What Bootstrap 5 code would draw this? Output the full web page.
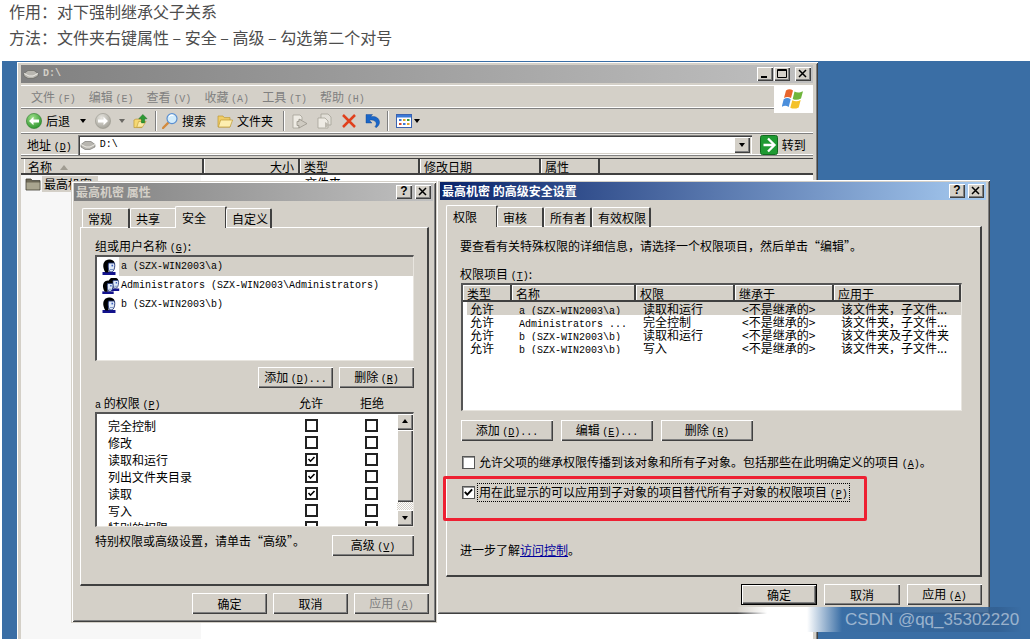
<!DOCTYPE html>
<html lang="zh-CN">
<head>
    <meta charset="UTF-8">
    <meta name="viewport" content="width=device-width, initial-scale=1.0">
    <title>对下强制继承父子关系</title>
    <link href="https://cdn.jsdelivr.net/npm/bootstrap@5.3.0/dist/css/bootstrap.min.css" rel="stylesheet">
    <style>
        body { width: 1030px; height: 639px; overflow: hidden; background: #fff; font-family: "Noto Sans CJK SC", sans-serif; font-size: 12px; line-height: 14px; color: #000; }
        .post-text { padding: 0 0 0 9px; height: 61px; font-size: 16px; line-height: 22px; color: #4d4d4d; }
        .post-text p { margin: 0; height: 26px; }
        .desk { position: relative; margin-left: 2px; height: 578px; background: #3a6ea5; overflow: hidden; }
        .win { position: absolute; background: #d4d0c8; box-shadow: inset 1px 1px 0 #fff, inset -1px -1px 0 #404040, inset 2px 2px 0 #d4d0c8, inset -2px -2px 0 #808080; }
        .win-explorer { left: 15px; top: 1px; width: 801px; height: 600px; padding: 3px 5px 0 4px; }
        .win-props { left: 70px; top: 121px; width: 364px; height: 440px; padding: 1px 3px 0 2px; outline: 1px solid #d4d0c8; }
        .win-adv { left: 435px; top: 119px; width: 553px; height: 434px; padding: 2px 4px 0 3px; }
        .titlebar { height: 18px; padding: 0 2px; font-weight: 700; color: #d4d0c8; background: linear-gradient(90deg, #808080, #c0c0c0); }
        .titlebar.on { color: #fff; background: linear-gradient(90deg, #0a246a, #a6caf0); }
        .tb-btn { width: 16px; height: 14px; background: #d4d0c8; color: #000; font: 700 12px/13px "Liberation Sans", sans-serif; text-align: center; box-shadow: inset 1px 1px 0 #fff, inset -1px -1px 0 #404040, inset -2px -2px 0 #808080; }
        .tb-btn svg { display: block; margin: 2px 0 0 3px; }
        .mono { font-family: "Liberation Mono", monospace; font-size: 10px; line-height: 10px; }
        .menubar { height: 24px; margin-top: 2px; border-top: 1px solid #fff; border-bottom: 1px solid #808080; box-shadow: inset 0 -1px 0 #fff; color: #808080; padding-left: 10px; }
        .menubar > span { width: 57.8px; }
        .flagbox { width: 39px; height: 28px; margin-bottom: -2px; margin-top: 2px; background: #fff; }
        .toolbar { height: 25px; padding-left: 5px; border-bottom: 1px solid #808080; box-shadow: inset 0 -1px 0 #fff; }
        .tool-sep { width: 2px; height: 20px; background: #808080; border-right: 1px solid #fff; }
        .caret-down { width: 0; height: 0; border: 3px solid transparent; border-top: 4px solid #000; border-bottom: 0; }
        .caret-up { display: inline-block; width: 0; height: 0; margin: 0 0 2px 8px; border: 4px solid transparent; border-bottom: 5px solid #a09c92; border-top: 0; }
        .addrbar { height: 22px; padding-left: 6px; padding-top: 1px; border-bottom: 1px solid #808080; box-shadow: inset 0 -1px 0 #fff; }
        .addr-input { width: 674px; height: 20px; margin-left: 6px; padding-left: 2px; background: #fff; box-shadow: inset 1px 1px 0 #808080, inset 2px 2px 0 #404040, inset -1px -1px 0 #fff, inset -2px -2px 0 #d4d0c8; }
        .addr-drop { width: 16px; height: 16px; margin: 0 2px; background: #d4d0c8; box-shadow: inset 1px 1px 0 #fff, inset -1px -1px 0 #404040, inset -2px -2px 0 #808080; }
        .col-head { height: 17px; margin-top: 2px; padding-left: 3px; border-top: 1px solid #404040; background: #d4d0c8; border-bottom: 2px solid #404040; }
        .col-head > span { height: 100%; padding-left: 4px; padding-top: 1px; border-right: 2px solid #404040; box-shadow: inset 1px 0 0 #fff; }
        .file-list { height: 480px; background: linear-gradient(90deg, #f7f7f7 180px, #fff 180px); padding: 1px 0 0 4px; color: #000; }
        .file-name { background: #d4d0c8; padding: 1px 4px 1px 2px; margin-left: 1px; width: 56px; white-space: nowrap; overflow: hidden; }
        .tabs-row { height: 26px; padding: 6px 0 0 6px; position: relative; z-index: 1; }
        .tab-item { height: 20px; margin-top: 1px; padding: 3px 0 0 5px; border-top: 1px solid #fff; border-left: 1px solid #fff; border-right: 2px solid #404040; border-top-left-radius: 2px; border-top-right-radius: 2px; }
        .tab-item.on { height: 22px; margin: -1px -1px -1px -2px; padding: 4px 0 0 6px; background: #d4d0c8; }
        .tab-panel { border-top: 1px solid #fff; border-left: 1px solid #fff; border-right: 2px solid #404040; border-bottom: 2px solid #404040; }
        .win-props .tab-panel { width: 349px; height: 359px; margin-left: 6px; padding: 11px 13px 0 14px; }
        .win-adv .tab-panel { width: 536px; height: 351px; margin-left: 6px; padding: 12px 0 0 13px; }
        .x-btn { padding: 0; border: 0; border-radius: 0; width: 75px; height: 21px; font-size: 12px; line-height: 14px; color: #000; background: #d4d0c8; box-shadow: inset 1px 1px 0 #fff, inset -1px -1px 0 #404040, inset -2px -2px 0 #808080; }
        .x-btn:disabled { opacity: 1; color: #808080; background: #d4d0c8; }
        .x-btn.deflt { outline: 1px solid #000; outline-offset: -1px; box-shadow: inset 2px 2px 0 #fff, inset -1px -1px 0 #000, inset -2px -2px 0 #404040, inset -3px -3px 0 #808080; }
        .sunken-box { background: #fff; border-top: 2px solid #555; border-left: 2px solid #555; border-right: 1px solid #e8e5df; border-bottom: 1px solid #e8e5df; overflow: hidden; }
        .user-row { padding: 0; border: 0; border-radius: 0; height: 19px; background: transparent; color: #000; display: flex; align-items: center; gap: 0; font-size: 10px; font-family: "Liberation Mono", monospace; }
        .user-row svg { flex: none; margin-left: 4px; margin-right: 2px; }
        .user-row span { align-self: stretch; display: flex; align-items: center; padding-left: 2px; flex-grow: 1; }
        .user-row.sel span { background: #d4d0c8; }
        .perm-head { margin-top: 8px; height: 14px; }
        .perm-head > span:nth-child(2) { margin-left: auto; width: 40px; text-align: center; margin-right: 21px; }
        .perm-head > span:nth-child(3) { width: 40px; text-align: center; margin-right: 22px; }
        .perm-box { height: 115px; margin-top: 2px; }
        .perm-rows { padding-top: 3px; }
        .perm-row { height: 17px; padding-left: 11px; align-items: center; }
        .perm-row > span { width: 197px; }
        .win-check.form-check-input[type=checkbox] { width: 13px; height: 13px; margin: 0; flex: none; border: 2px solid #222; border-radius: 0; background-color: #fff; }
        .perm-row .win-check.form-check-input[type=checkbox] + .win-check.form-check-input[type=checkbox] { margin-left: 47px; }
        .win-check.thin-edge.form-check-input[type=checkbox] { border: 1px solid #555; box-shadow: inset 1px 1px 0 #999; }
        .win-check:checked { background-color: #fff; border-color: #222; background-image: url("data:image/svg+xml,%3Csvg xmlns='http://www.w3.org/2000/svg' viewBox='0 0 9 9'%3E%3Cpath d='M1.5 4l2 2.2L7.5 2' fill='none' stroke='%23000' stroke-width='1.6'/%3E%3C/svg%3E"); background-size: 100%; }
        .win-check:focus { box-shadow: none; border-color: #222; }
        .scroll-col { width: 16px; flex: none; background: repeating-conic-gradient(#d4d0c8 0 25%, #fff 0 50%) 0 0/2px 2px; }
        .scroll-btn { height: 16px; background: #d4d0c8; box-shadow: inset 1px 1px 0 #fff, inset -1px -1px 0 #404040, inset -2px -2px 0 #808080; }
        .scroll-btn i { width: 0; height: 0; border: 3px solid transparent; }
        .scroll-thumb { height: 72px; background: #d4d0c8; box-shadow: inset 1px 1px 0 #fff, inset -1px -1px 0 #404040, inset -2px -2px 0 #808080; }
        .acl-box { width: 501px; height: 128px; margin: 1px 0 0 1px; }
        .acl-table { table-layout: fixed; width: 498px; margin: 0; font-size: 12px; line-height: 13px; border-collapse: separate; border-spacing: 0; }
        .acl-table .mono { line-height: 0; }
        .acl-table > :not(caption) > * > * { padding: 0 0 0 7px; border: 0; color: #000; background: transparent; box-shadow: none; height: 13px; white-space: nowrap; overflow: hidden; }
        .acl-table thead th { font-weight: 400; height: 17px; background: #d4d0c8; padding: 0 0 0 4px; border-right: 2px solid #404040; border-bottom: 2px solid #404040; box-shadow: inset 1px 1px 0 #fff; }
        .acl-table tr.sel td { background: #d4d0c8; }
        .acl-table tr.sel td:first-child { background: linear-gradient(90deg, #fff 4px, #d4d0c8 4px); }
        .focus-line { outline: 1px dotted #000; outline-offset: 0; padding: 1px 1px; }
        .red-mark { position: absolute; left: 6px; top: 296px; width: 424px; height: 45px; border: 3px solid #ee2032; border-radius: 2px; pointer-events: none; }
        .acl-link { color: #00009c; }
        .mark-stamp { position: absolute; left: 735px; top: 546px; width: 285px; height: 25px; padding-left: 108px; font: 17px/26px "Liberation Sans", sans-serif; color: rgba(255,255,255,.5); white-space: nowrap; background: linear-gradient(90deg, rgba(255,255,255,0) 0, #fff 30px, #fff 70px, rgba(58,110,165,1) 105px, rgba(50,95,145,.85) 260px, rgba(58,110,165,0) 285px); }
    </style>
</head>
<body>
    <svg width="0" height="0" class="position-absolute">
        <defs>
            <radialGradient id="gGreen" cx=".4" cy=".3" r=".8"><stop offset="0" stop-color="#9fe08a"/><stop offset="1" stop-color="#1f8a22"/></radialGradient>
            <radialGradient id="gGray" cx=".4" cy=".3" r=".8"><stop offset="0" stop-color="#e8e6e0"/><stop offset="1" stop-color="#9a988f"/></radialGradient>
            <symbol id="i-back" viewBox="0 0 16 16"><circle cx="8" cy="8" r="7.6" fill="url(#gGreen)" stroke="#2f7d2d" stroke-width=".6"/><path d="M3 8l4.5-4.2v2.7H13v3H7.5v2.7z" fill="#fff"/></symbol>
            <symbol id="i-fwd" viewBox="0 0 16 16"><circle cx="8" cy="8" r="7.6" fill="url(#gGray)" stroke="#9b998f" stroke-width=".6"/><path d="M13 8L8.5 3.8v2.7H3v3h5.500v2.700z" fill="#fff"/></symbol>
            <symbol id="i-up" viewBox="0 0 16 16"><path d="M1 7l2-1h7l-.5 9H1z" fill="#f5d873" stroke="#b8932c" stroke-width=".7"/><path d="M10 15l-6 .2L6 9h8z" fill="#fbeaa3" stroke="#b8932c" stroke-width=".6" transform="translate(0 -.5)"/><path d="M10.500 1L15 5.600h-2.600V10H9V5.600H6.200z" fill="#2c9a33" stroke="#17681e" stroke-width=".5"/></symbol>
            <symbol id="i-search" viewBox="0 0 16 16"><path d="M1 15l5-5" stroke="#d38a3d" stroke-width="2.4" stroke-linecap="round"/><circle cx="10" cy="5.600" r="5" fill="#d3ecfb" stroke="#5b8fd0" stroke-width="1.2"/><path d="M7 4c1-1.600 3-2 4.400-1.400" stroke="#fff" stroke-width="1.2" fill="none"/></symbol>
            <symbol id="i-folder" viewBox="0 0 16 16"><path d="M1 3h5l1.200 1.600H13V14H1z" fill="#f0cd68" stroke="#bd9a35" stroke-width=".7"/><path d="M1.400 14L3.600 7H15.600L13 14z" fill="#fdeeb0" stroke="#bd9a35" stroke-width=".7"/></symbol>
            <symbol id="i-fold-gray" viewBox="0 0 16 16"><path d="M1 3h5l1.200 1.600H15V14H1z" fill="#6e6a58" stroke="#3f3d33" stroke-width=".8"/><path d="M1.500 6.500H14.600V13.500H1.500z" fill="#a9a58f"/></symbol>
            <symbol id="i-move" viewBox="0 0 16 16"><path d="M1 2h7l2 2v3h-3v3H7v5H1z" fill="#eeebe4" stroke="#a5a297" stroke-width=".8"/><path d="M7 6l8 4.600-8 4.400v-2.500H5V8.500h2z" fill="#cfcbc2" stroke="#908d83" stroke-width=".7"/></symbol>
            <symbol id="i-copy" viewBox="0 0 16 16"><path d="M4 1h7l3 3v8H4z" fill="#e2dfd8" stroke="#a5a297" stroke-width=".8"/><path d="M1 5h7l3 3v7H1z" fill="#eeebe4" stroke="#a5a297" stroke-width=".8"/><path d="M8 9l5 3-5 3z" fill="#bdb9af"/></symbol>
            <symbol id="i-del" viewBox="0 0 16 16"><path d="M2 2l12 12M14 2L2 14" stroke="#e0401c" stroke-width="2.5"/></symbol>
            <symbol id="i-undo" viewBox="0 0 16 16"><path d="M1 1.500h6.500L5.600 3.700c4-1 8.400.8 8.900 5 .2 2.300-1 4.600-3.500 6l-1-1.200c1.300-1.200 1.500-2.800 1-3.900C10.200 7.300 7.300 6.600 4.400 7.300L7 10H1z" fill="#1a66c8" stroke="#0d3f8a" stroke-width=".4"/></symbol>
            <symbol id="i-views" viewBox="0 0 16 16"><rect x=".5" y="1.500" width="15" height="13" fill="#fff" stroke="#3a62b0"/><rect x="1" y="2" width="14" height="2.500" fill="#3a79d8"/><g><rect x="3" y="6" width="2.500" height="2" fill="#3a79d8"/><rect x="7" y="6" width="2.500" height="2" fill="#e2a32b"/><rect x="11" y="6" width="2.500" height="2" fill="#3a9a3d"/><rect x="3" y="10" width="2.500" height="2" fill="#d04a30"/><rect x="7" y="10" width="2.500" height="2" fill="#3a79d8"/><rect x="11" y="10" width="2.500" height="2" fill="#e2a32b"/></g></symbol>
            <symbol id="i-drive" viewBox="0 0 16 12"><path d="M1 5.500L5 2.500h6l4 3V8l-5 2.500H5L1 8z" fill="#b8b6b0" stroke="#55544f" stroke-width=".5"/><path d="M1 5.500l5 2.500h4l5-2.500" fill="none" stroke="#eeece6" stroke-width="1"/></symbol>
            <symbol id="i-go" viewBox="0 0 18 20"><rect x=".5" y=".5" width="17" height="19" rx="2" fill="#1f9a32" stroke="#126a1f"/><path d="M8 3.500L14.500 10 8 16.500M3.500 10H14" fill="none" stroke="#fff" stroke-width="2.300"/></symbol>
            <symbol id="i-flag" viewBox="0 0 24 22"><path d="M4 2.500c2.500-1.700 4.500-1.700 7 0L9 10c-2.500-1.500-4.500-1.500-7 0z" fill="#e8652c"/><path d="M12.500 3.500c2.500 1.300 5 1.300 8.500-.3L19 10.600c-3 1.600-5.500 1.600-8.300.3z" fill="#6fb53c"/><path d="M1.700 11.200c2.500-1.500 4.500-1.500 7 0l-2 7.800c-2.500-1.600-4.500-1.600-7 0z" fill="#4b8fdc"/><path d="M10.300 12.200c2.800 1.300 5.300 1.300 8.400-.3l-2 7.500c-3 1.500-5.800 1.600-8.400.3z" fill="#f4c22b"/></symbol>
            <symbol id="i-user" viewBox="0 0 16 16"><path d="M1.500 13h13v3h-13z" fill="#12128c"/><path d="M2.500 9C1.500 4 4 .5 8 .5c3 0 5.500 1.500 5.500 3.500H8C7 6 7 9 7.500 11v2.500H4.500C3.500 12 3 11 2.500 9z" fill="#000"/><path d="M7.500 4h6c.7 3 .1 7-2 8.700-1 .4-2.500.3-3.500-.7-.8-2.500-1-5.500-.5-8z" fill="#dfe9f7" stroke="#1c2f70" stroke-width=".9"/><path d="M10.500 5.700h1.600v1.700h-1.600z" fill="#3a5fc0"/><path d="M9 10h3v1H9z" fill="#7f98c8"/></symbol>
            <symbol id="i-users" viewBox="0 0 20 16"><g transform="translate(5.500 -1)"><use href="#i-user" width="14" height="14"/></g><g transform="translate(0 2)"><use href="#i-user" width="14" height="14"/></g></symbol>
        </defs>
    </svg>

    <div class="post-text">
        <p>作用：对下强制继承父子关系</p>
        <p>方法：文件夹右键属性 – 安全 – 高级 – 勾选第二个对号</p>
    </div>

    <div class="desk">
        <!-- explorer -->
        <div class="win win-explorer">
            <div class="titlebar d-flex align-items-center">
                <svg width="16" height="12"><use href="#i-drive"/></svg>
                <span class="mono ms-1">D:\</span>
                <div class="ms-auto d-flex" style="gap:1px">
                    <div class="tb-btn"><svg width="9" height="9"><path d="M1 7h6v2H1z"/></svg></div>
                    <div class="tb-btn me-1"><svg width="10" height="9"><path d="M.5.500h9v8h-9zM.5 1.500h9" fill="none" stroke="#000"/></svg></div>
                    <div class="tb-btn"><svg width="9" height="9"><path d="M1 1l7 7M8 1L1 8" stroke="#000" stroke-width="1.500"/></svg></div>
                </div>
            </div>
            <div class="menubar d-flex align-items-center">
                <span>文件 <span class="mono">(F)</span></span>
                <span>编辑 <span class="mono">(E)</span></span>
                <span>查看 <span class="mono">(V)</span></span>
                <span>收藏 <span class="mono">(A)</span></span>
                <span>工具 <span class="mono">(T)</span></span>
                <span>帮助 <span class="mono">(H)</span></span>
                <div class="flagbox ms-auto d-flex align-items-center justify-content-center"><svg width="24" height="22"><use href="#i-flag"/></svg></div>
            </div>
            <div class="toolbar d-flex align-items-center">
                <svg width="16" height="16"><use href="#i-back"/></svg>
                <span class="ms-1">后退</span>
                <i class="caret-down" style="margin-left:10px"></i>
                <svg width="16" height="16" style="margin-left:9px"><use href="#i-fwd"/></svg>
                <i class="caret-down opacity-50" style="margin-left:8px"></i>
                <svg width="15" height="16" style="margin-left:8px"><use href="#i-up"/></svg>
                <div class="tool-sep" style="margin-left:7px"></div>
                <svg width="16" height="16" style="margin-left:5px"><use href="#i-search"/></svg>
                <span class="ms-1">搜索</span>
                <svg width="16" height="16" style="margin-left:11px"><use href="#i-folder"/></svg>
                <span class="ms-1">文件夹</span>
                <div class="tool-sep" style="margin-left:10px"></div>
                <svg width="16" height="16" style="margin-left:7px"><use href="#i-move"/></svg>
                <svg width="16" height="16" style="margin-left:9px"><use href="#i-copy"/></svg>
                <svg width="16" height="16" style="margin-left:8px"><use href="#i-del"/></svg>
                <svg width="16" height="16" style="margin-left:8px"><use href="#i-undo"/></svg>
                <div class="tool-sep" style="margin-left:6px"></div>
                <svg width="16" height="16" style="margin-left:7px"><use href="#i-views"/></svg>
                <i class="caret-down" style="margin-left:2px"></i>
            </div>
            <div class="addrbar d-flex align-items-center">
                <span>地址 <span class="mono">(<u>D</u>)</span></span>
                <div class="addr-input d-flex align-items-center">
                    <svg width="16" height="12"><use href="#i-drive"/></svg>
                    <span class="mono ms-1">D:\</span>
                    <div class="addr-drop ms-auto d-flex align-items-center justify-content-center"><i class="caret-down"></i></div>
                </div>
                <svg width="18" height="20" class="ms-2"><use href="#i-go"/></svg>
                <span class="ms-1">转到</span>
            </div>
            <div class="col-head d-flex">
                <span style="width:180px">名称<i class="caret-up"></i></span>
                <span class="text-end pe-1" style="width:96px">大小</span>
                <span style="width:120px">类型</span>
                <span style="width:121px">修改日期</span>
                <span style="width:59px">属性</span>
            </div>
            <div class="file-list d-flex align-items-start">
                <svg width="16" height="16"><use href="#i-fold-gray"/></svg>
                <span class="file-name">最高机密</span>
                <span style="margin-left:207px">文件夹</span>
            </div>
        </div>

        <!-- properties dialog -->
        <div class="win win-props">
            <div class="titlebar d-flex align-items-center">
                <span>最高机密 属性</span>
                <div class="ms-auto d-flex" style="gap:3px">
                    <div class="tb-btn">?</div>
                    <div class="tb-btn"><svg width="9" height="9"><path d="M1 1l7 7M8 1L1 8" stroke="#000" stroke-width="1.500"/></svg></div>
                </div>
            </div>
            <div class="tabs-row d-flex">
                <div class="tab-item" style="width:48px;margin-left:2px">常规</div>
                <div class="tab-item" style="width:47px">共享</div>
                <div class="tab-item on" style="width:52px">安全</div>
                <div class="tab-item" style="width:46px">自定义</div>
            </div>
            <div class="tab-panel">
                <div>组或用户名称 <span class="mono">(<u>G</u>)</span>:</div>
                <div class="sunken-box list-group rounded-0" style="height:106px;margin-top:1px">
                    <div class="list-group-item user-row sel mt-0"><svg width="16" height="16"><use href="#i-user"/></svg><span>a (SZX-WIN2003\a)</span></div>
                    <div class="list-group-item user-row"><svg width="20" height="16" style="margin:0 0 0 4px"><use href="#i-users"/></svg><span class="ps-0">Administrators (SZX-WIN2003\Administrators)</span></div>
                    <div class="list-group-item user-row"><svg width="16" height="16"><use href="#i-user"/></svg><span>b (SZX-WIN2003\b)</span></div>
                </div>
                <div class="d-flex justify-content-end" style="gap:6px;margin-top:6px">
                    <button type="button" class="btn x-btn">添加 <span class="mono">(<u>D</u>)...</span></button>
                    <button type="button" class="btn x-btn">删除 <span class="mono">(<u>R</u>)</span></button>
                </div>
                <div class="perm-head d-flex">
                    <span><span class="mono">a</span> 的权限 <span class="mono">(<u>P</u>)</span></span>
                    <span>允许</span>
                    <span>拒绝</span>
                </div>
                <div class="sunken-box perm-box d-flex">
                    <div class="flex-grow-1 perm-rows">
                        <div class="perm-row d-flex"><span>完全控制</span><input class="form-check-input win-check" type="checkbox"><input class="form-check-input win-check" type="checkbox"></div>
                        <div class="perm-row d-flex"><span>修改</span><input class="form-check-input win-check" type="checkbox"><input class="form-check-input win-check" type="checkbox"></div>
                        <div class="perm-row d-flex"><span>读取和运行</span><input class="form-check-input win-check" type="checkbox" checked><input class="form-check-input win-check" type="checkbox"></div>
                        <div class="perm-row d-flex"><span>列出文件夹目录</span><input class="form-check-input win-check" type="checkbox" checked><input class="form-check-input win-check" type="checkbox"></div>
                        <div class="perm-row d-flex"><span>读取</span><input class="form-check-input win-check" type="checkbox" checked><input class="form-check-input win-check" type="checkbox"></div>
                        <div class="perm-row d-flex"><span>写入</span><input class="form-check-input win-check" type="checkbox"><input class="form-check-input win-check" type="checkbox"></div>
                        <div class="perm-row d-flex"><span>特别的权限</span><input class="form-check-input win-check" type="checkbox"><input class="form-check-input win-check" type="checkbox"></div>
                    </div>
                    <div class="scroll-col d-flex flex-column">
                        <div class="scroll-btn d-flex justify-content-center"><i style="border-bottom:4px solid #000;border-top:0;margin-top:5px"></i></div>
                        <div class="scroll-thumb"></div>
                        <div class="scroll-btn d-flex justify-content-center mt-auto"><i style="border-top:4px solid #000;border-bottom:0;margin-top:6px"></i></div>
                    </div>
                </div>
                <div class="d-flex justify-content-between" style="margin-top:8px">
                    <span style="margin-top:-1px">特别权限或高级设置，请单击“高级”。</span>
                    <button type="button" class="btn x-btn" style="width:82px">高级 <span class="mono">(<u>V</u>)</span></button>
                </div>
            </div>
            <div class="d-flex justify-content-end" style="gap:6px;margin:7px 4px 0 0">
                <button type="button" class="btn x-btn">确定</button>
                <button type="button" class="btn x-btn">取消</button>
                <button type="button" class="btn x-btn" disabled>应用 <span class="mono">(<u>A</u>)</span></button>
            </div>
        </div>

        <!-- advanced dialog -->
        <div class="win win-adv">
            <div class="titlebar on d-flex align-items-center">
                <span>最高机密 的高级安全设置</span>
                <div class="ms-auto d-flex" style="gap:3px">
                    <div class="tb-btn">?</div>
                    <div class="tb-btn"><svg width="9" height="9"><path d="M1 1l7 7M8 1L1 8" stroke="#000" stroke-width="1.500"/></svg></div>
                </div>
            </div>
            <div class="tabs-row d-flex">
                <div class="tab-item on" style="width:52px;margin-left:0">权限</div>
                <div class="tab-item" style="width:47px">审核</div>
                <div class="tab-item" style="width:48px">所有者</div>
                <div class="tab-item" style="width:59px">有效权限</div>
            </div>
            <div class="tab-panel">
                <div>要查看有关特殊权限的详细信息，请选择一个权限项目，然后单击“编辑”。</div>
                <div style="margin-top:14px">权限项目 <span class="mono">(<u>T</u>)</span>:</div>
                <div class="sunken-box acl-box">
                    <table class="table acl-table">
                        <colgroup><col style="width:49px"><col style="width:124px"><col style="width:99px"><col style="width:99px"><col style="width:127px"></colgroup>
                        <thead>
                            <tr><th>类型</th><th>名称</th><th>权限</th><th>继承于</th><th>应用于</th></tr>
                        </thead>
                        <tbody>
                            <tr class="sel"><td>允许</td><td><span class="mono">a (SZX-WIN2003\a)</span></td><td>读取和运行</td><td>&lt;不是继承的&gt;</td><td>该文件夹，子文件...</td></tr>
                            <tr><td>允许</td><td><span class="mono">Administrators ...</span></td><td>完全控制</td><td>&lt;不是继承的&gt;</td><td>该文件夹，子文件...</td></tr>
                            <tr><td>允许</td><td><span class="mono">b (SZX-WIN2003\b)</span></td><td>读取和运行</td><td>&lt;不是继承的&gt;</td><td>该文件夹及子文件夹</td></tr>
                            <tr><td>允许</td><td><span class="mono">b (SZX-WIN2003\b)</span></td><td>写入</td><td>&lt;不是继承的&gt;</td><td>该文件夹，子文件...</td></tr>
                        </tbody>
                    </table>
                </div>
                <div class="d-flex" style="gap:8px;margin:9px 0 0 1px">
                    <button type="button" class="btn x-btn" style="width:92px">添加 <span class="mono">(<u>D</u>)...</span></button>
                    <button type="button" class="btn x-btn" style="width:92px">编辑 <span class="mono">(<u>E</u>)...</span></button>
                    <button type="button" class="btn x-btn" style="width:92px">删除 <span class="mono">(<u>R</u>)</span></button>
                </div>
                <div class="d-flex align-items-center" style="margin:14px 0 0 2px;gap:4px">
                    <input class="form-check-input win-check thin-edge" type="checkbox">
                    <span>允许父项的继承权限传播到该对象和所有子对象。包括那些在此明确定义的项目 <span class="mono">(<u>A</u>)</span>。</span>
                </div>
                <div class="d-flex align-items-center" style="margin:14px 0 0 2px;gap:3px">
                    <input class="form-check-input win-check thin-edge" type="checkbox" checked>
                    <span class="focus-line">用在此显示的可以应用到子对象的项目替代所有子对象的权限项目 <span class="mono">(<u>P</u>)</span></span>
                </div>
                <div style="margin-top:42px">进一步了解<a class="acl-link" href="#">访问控制</a>。</div>
            </div>
            <div class="d-flex justify-content-end" style="gap:7px;margin:7px 4px 0 0">
                <button type="button" class="btn x-btn deflt" style="width:76px">确定</button>
                <button type="button" class="btn x-btn" style="width:76px">取消</button>
                <button type="button" class="btn x-btn" style="width:75px">应用 <span class="mono">(<u>A</u>)</span></button>
            </div>
            <div class="red-mark"></div>
        </div>

        <div class="mark-stamp">CSDN @qq_35302220</div>
    </div>

    <script src="https://cdn.jsdelivr.net/npm/bootstrap@5.3.0/dist/js/bootstrap.bundle.min.js"></script>
</body>
</html>
